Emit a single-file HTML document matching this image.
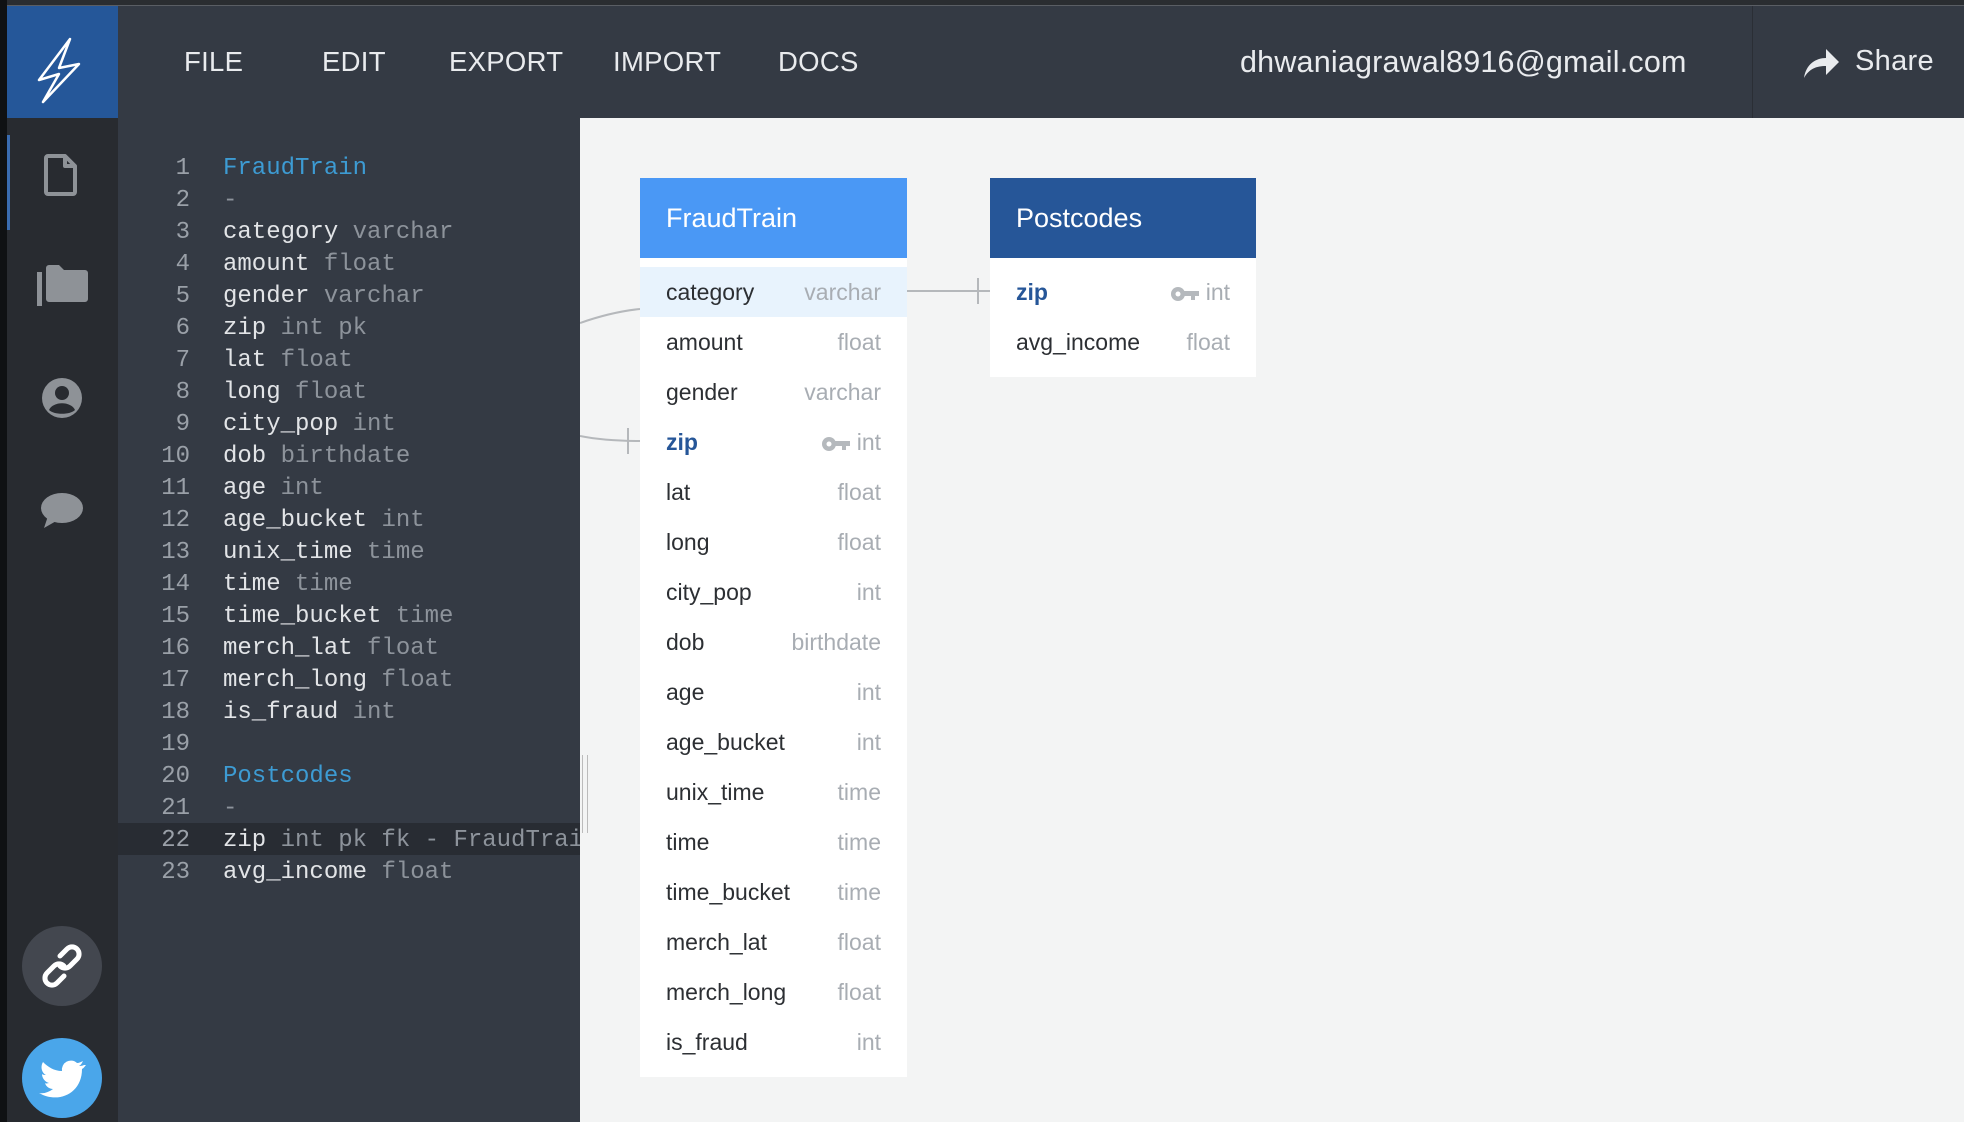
<!DOCTYPE html>
<html><head><meta charset="utf-8"><style>
*{margin:0;padding:0;box-sizing:border-box}
body{width:1964px;height:1122px;overflow:hidden;background:#f3f4f4;font-family:"Liberation Sans",sans-serif;position:relative}
.abs{position:absolute}
#edge{left:0;top:0;width:7px;height:1122px;background:#0f1113}
#topline{left:0;top:0;width:1964px;height:6px;background:#2a2d31;border-bottom:1px solid #5a5e64}
#header{left:7px;top:6px;width:1957px;height:112px;background:#343a44}
#logo{left:7px;top:6px;width:111px;height:112px;background:#255799}
.menu{top:46px;color:#e9ebee;font-size:27.5px;letter-spacing:0.3px}
#side{left:7px;top:118px;width:111px;height:1004px;background:#282b30}
#activebar{left:7px;top:135px;width:3px;height:95px;background:#3a6cb0}
#editor{left:118px;top:118px;width:462px;height:1004px;background:#343a44;overflow:hidden}
.ln{position:absolute;left:0;width:72px;text-align:right;color:#9aa0a8;font-family:"Liberation Mono",monospace;font-size:24px}
.cd{position:absolute;left:105px;white-space:pre;color:#e2e4e7;font-family:"Liberation Mono",monospace;font-size:24px}
.ty{color:#8d939b}.tb{color:#3d9bd3}
.tbl{background:#fff}
.th{height:80px;color:#fff;font-size:27px;padding-left:26px;line-height:80px}
.row{height:50px;position:relative;font-size:23px;color:#2c2f33;line-height:50px;padding-left:26px}
.row .t{position:absolute;right:26px;top:0;color:#a8adb3}
.pk{color:#265698;font-weight:bold}
.key{display:inline-block;vertical-align:middle;margin-right:6px}
</style></head><body>
<div id="topline" class="abs"></div>
<div id="header" class="abs"></div>
<div id="edge" class="abs"></div>
<div id="logo" class="abs">
<svg width="111" height="112" viewBox="0 0 111 112"><path d="M63 33 L32 74 L52 68 L36 96 L72 58 L52 62 Z" fill="none" stroke="#fff" stroke-width="2.5" stroke-linejoin="round"/></svg>
</div>
<div class="abs menu" style="left:184px">FILE</div>
<div class="abs menu" style="left:322px">EDIT</div>
<div class="abs menu" style="left:449px">EXPORT</div>
<div class="abs menu" style="left:613px">IMPORT</div>
<div class="abs menu" style="left:778px">DOCS</div>
<div class="abs menu" style="left:1240px;font-size:30.5px;top:45px;letter-spacing:0.2px">dhwaniagrawal8916@gmail.com</div>
<div class="abs" style="left:1752px;top:6px;width:1px;height:112px;background:#2a2e35"></div>
<svg class="abs" style="left:1802px;top:46px" width="38" height="34" viewBox="0 0 38 34"><path d="M2 32 C4 18 14 12 24 12 L24 3 L37 16 L24 29 L24 20 C14 20 7 23 2 32 Z" fill="#e9ebee"/></svg>
<div class="abs menu" style="left:1855px;font-size:29px;top:45px">Share</div>

<div id="side" class="abs"></div>
<div id="activebar" class="abs"></div>
<svg class="abs" style="left:44px;top:154px" width="34" height="42" viewBox="0 0 34 42"><path d="M4 2 H21 L31 12 V38 a2 2 0 0 1 -2 2 H4 a2 2 0 0 1 -2 -2 V4 a2 2 0 0 1 2 -2 Z M21 2 V12 H31" fill="none" stroke="#8e9297" stroke-width="4" stroke-linejoin="round"/></svg>
<svg class="abs" style="left:37px;top:264px" width="52" height="42" viewBox="0 0 52 42"><rect x="0" y="8" width="5" height="34" fill="#8e9297"/><path d="M9 4 a3 3 0 0 1 3 -3 H22 L27 6 H48 a3 3 0 0 1 3 3 V35 a3 3 0 0 1 -3 3 H12 a3 3 0 0 1 -3 -3 Z" fill="#8e9297"/></svg>
<svg class="abs" style="left:41px;top:377px" width="42" height="42" viewBox="0 0 42 42"><circle cx="21" cy="21" r="20" fill="#8e9297"/><circle cx="21" cy="16" r="7" fill="#282b30"/><path d="M8 33 C12 24 30 24 34 33 C29 38 13 38 8 33 Z" fill="#282b30"/></svg>
<svg class="abs" style="left:40px;top:492px" width="44" height="38" viewBox="0 0 44 38"><ellipse cx="22" cy="16" rx="21" ry="15" fill="#8e9297"/><path d="M8 24 L4 36 L18 28 Z" fill="#8e9297"/></svg>
<svg class="abs" style="left:22px;top:926px" width="80" height="80"><circle cx="40" cy="40" r="40" fill="#43474f"/><g fill="none" stroke="#fff" stroke-width="5" stroke-linecap="round"><path d="M38 30 l7 -7 a7 7 0 0 1 10 10 l-7 7 a7 7 0 0 1 -10 0"/><path d="M42 50 l-7 7 a7 7 0 0 1 -10 -10 l7 -7 a7 7 0 0 1 10 0"/></g></svg>
<svg class="abs" style="left:22px;top:1038px" width="80" height="80"><circle cx="40" cy="40" r="40" fill="#4aa6ea"/><path d="M62 27 c-2 1 -4 1 -5 1 c2 -1 3 -3 4 -5 c-2 1 -4 2 -6 2 a9 9 0 0 0 -15 8 c-8 0 -14 -4 -19 -9 c-3 5 -1 11 3 13 c-1 0 -3 0 -4 -1 c0 4 3 8 7 9 c-1 0 -3 1 -4 0 c1 4 5 6 8 6 c-4 3 -9 5 -14 4 c19 11 43 1 43 -24 c2 -1 3 -3 4 -4z" fill="#fff"/></svg>

<div id="editor" class="abs">
<div style="position:absolute;left:0;top:705px;width:462px;height:32px;background:#282c33"></div>
</div>
<div class="abs" style="left:582px;top:755px;width:6px;height:78px;border-left:1px solid #bbb;border-right:1px solid #bbb"></div>
<div class="abs" style="left:118px;top:155px;width:462px;height:750px;overflow:hidden" id="code">
<div class="ln" style="top:0">1</div><div class="cd tb" style="top:0">FraudTrain</div>
<div class="ln" style="top:32px">2</div><div class="cd ty" style="top:32px">-</div>
<div class="ln" style="top:64px">3</div><div class="cd" style="top:64px">category <span class="ty">varchar</span></div>
<div class="ln" style="top:96px">4</div><div class="cd" style="top:96px">amount <span class="ty">float</span></div>
<div class="ln" style="top:128px">5</div><div class="cd" style="top:128px">gender <span class="ty">varchar</span></div>
<div class="ln" style="top:160px">6</div><div class="cd" style="top:160px">zip <span class="ty">int pk</span></div>
<div class="ln" style="top:192px">7</div><div class="cd" style="top:192px">lat <span class="ty">float</span></div>
<div class="ln" style="top:224px">8</div><div class="cd" style="top:224px">long <span class="ty">float</span></div>
<div class="ln" style="top:256px">9</div><div class="cd" style="top:256px">city_pop <span class="ty">int</span></div>
<div class="ln" style="top:288px">10</div><div class="cd" style="top:288px">dob <span class="ty">birthdate</span></div>
<div class="ln" style="top:320px">11</div><div class="cd" style="top:320px">age <span class="ty">int</span></div>
<div class="ln" style="top:352px">12</div><div class="cd" style="top:352px">age_bucket <span class="ty">int</span></div>
<div class="ln" style="top:384px">13</div><div class="cd" style="top:384px">unix_time <span class="ty">time</span></div>
<div class="ln" style="top:416px">14</div><div class="cd" style="top:416px">time <span class="ty">time</span></div>
<div class="ln" style="top:448px">15</div><div class="cd" style="top:448px">time_bucket <span class="ty">time</span></div>
<div class="ln" style="top:480px">16</div><div class="cd" style="top:480px">merch_lat <span class="ty">float</span></div>
<div class="ln" style="top:512px">17</div><div class="cd" style="top:512px">merch_long <span class="ty">float</span></div>
<div class="ln" style="top:544px">18</div><div class="cd" style="top:544px">is_fraud <span class="ty">int</span></div>
<div class="ln" style="top:576px">19</div>
<div class="ln" style="top:608px">20</div><div class="cd tb" style="top:608px">Postcodes</div>
<div class="ln" style="top:640px">21</div><div class="cd ty" style="top:640px">-</div>
<div class="ln" style="top:672px">22</div><div class="cd" style="top:672px">zip <span class="ty">int pk fk - FraudTrain.zip</span></div>
<div class="ln" style="top:704px">23</div><div class="cd" style="top:704px">avg_income <span class="ty">float</span></div>
</div>

<svg class="abs" style="left:580px;top:118px" width="1384" height="1004">
<g fill="none" stroke="#b5b8bb" stroke-width="2">
<path d="M0 205 C20 198 40 193 60 191"/>
<path d="M0 318 C20 322 40 323 60 323"/><path d="M48 310 V336"/>
<path d="M327 173 H410"/><path d="M398 160 V186"/>
</g></svg>

<div class="abs tbl" style="left:640px;top:178px;width:267px;height:899px">
<div class="th" style="background:#4a98f5">FraudTrain</div>
<div style="height:9px"></div>
<div class="row" style="background:#e8f3fd">category<span class="t">varchar</span></div>
<div class="row">amount<span class="t">float</span></div>
<div class="row">gender<span class="t">varchar</span></div>
<div class="row"><span class="pk">zip</span><span class="t"><svg class="key" width="30" height="16" viewBox="0 0 30 16"><circle cx="8" cy="8" r="7" fill="#b5b9bd"/><circle cx="8" cy="8" r="2.5" fill="#fff"/><rect x="13" y="5" width="16" height="5" fill="#b5b9bd"/><rect x="21" y="9" width="4" height="5" fill="#b5b9bd"/></svg>int</span></div>
<div class="row">lat<span class="t">float</span></div>
<div class="row">long<span class="t">float</span></div>
<div class="row">city_pop<span class="t">int</span></div>
<div class="row">dob<span class="t">birthdate</span></div>
<div class="row">age<span class="t">int</span></div>
<div class="row">age_bucket<span class="t">int</span></div>
<div class="row">unix_time<span class="t">time</span></div>
<div class="row">time<span class="t">time</span></div>
<div class="row">time_bucket<span class="t">time</span></div>
<div class="row">merch_lat<span class="t">float</span></div>
<div class="row">merch_long<span class="t">float</span></div>
<div class="row">is_fraud<span class="t">int</span></div>
</div>

<div class="abs tbl" style="left:990px;top:178px;width:266px;height:199px">
<div class="th" style="background:#265698">Postcodes</div>
<div style="height:9px"></div>
<div class="row"><span class="pk">zip</span><span class="t"><svg class="key" width="30" height="16" viewBox="0 0 30 16"><circle cx="8" cy="8" r="7" fill="#b5b9bd"/><circle cx="8" cy="8" r="2.5" fill="#fff"/><rect x="13" y="5" width="16" height="5" fill="#b5b9bd"/><rect x="21" y="9" width="4" height="5" fill="#b5b9bd"/></svg>int</span></div>
<div class="row">avg_income<span class="t">float</span></div>
</div>
</body></html>
